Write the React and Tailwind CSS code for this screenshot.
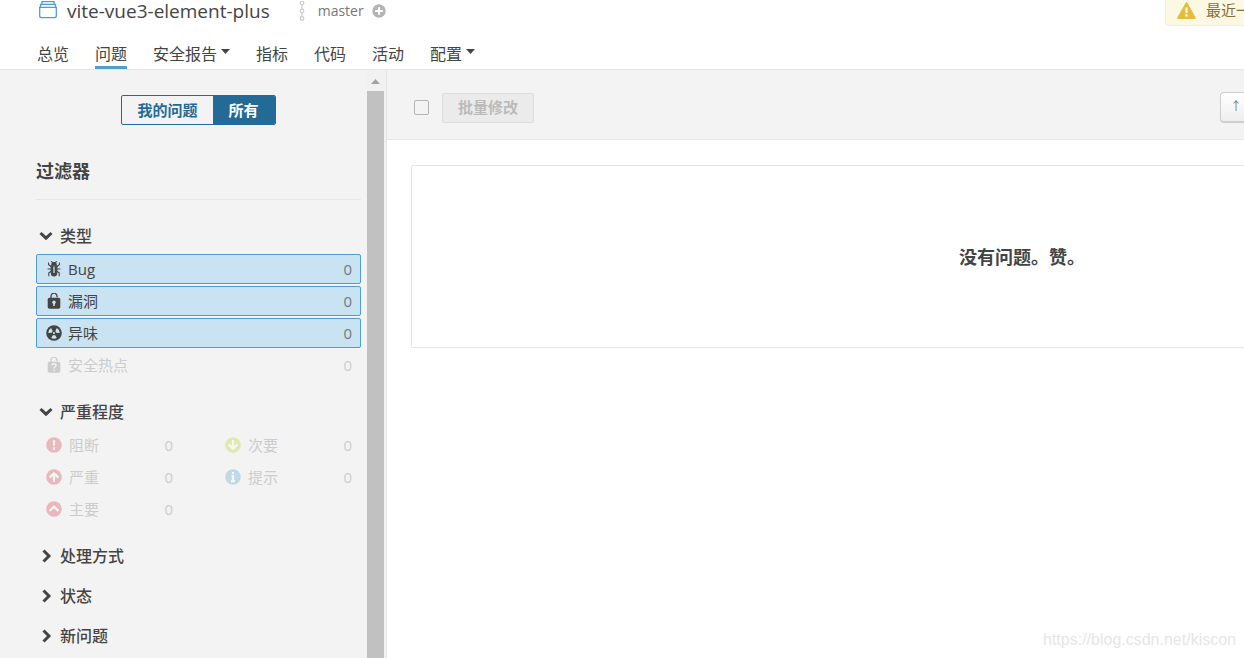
import { useState } from "react";

const TABS = [
  { label: "总览" },
  { label: "问题", active: true },
  { label: "安全报告", menu: true },
  { label: "指标" },
  { label: "代码" },
  { label: "活动" },
  { label: "配置", menu: true },
];

const TYPES = [
  { label: "Bug", icon: BugIcon, count: 0, selected: true },
  { label: "漏洞", icon: VulnerabilityIcon, count: 0, selected: true },
  { label: "异味", icon: CodeSmellIcon, count: 0, selected: true },
  { label: "安全热点", icon: HotspotIcon, count: 0, disabled: true },
];

const SEVERITIES = [
  { label: "阻断", color: "#d4333f", path: "M8 3.2v5.6M8 10.6v2.2", count: 0 },
  { label: "次要", color: "#b0d513", path: "M8 3v8.5M3.6 7.4 8 11.8l4.4-4.4", count: 0 },
  { label: "严重", color: "#d4333f", path: "M8 13V4.5M3.6 8.6 8 4.2l4.4 4.4", count: 0 },
  { label: "提示", color: "#4b9fd5", path: "M8 3v2.2M6.6 7H8v5M6 12.2h4", count: 0 },
  { label: "主要", color: "#d4333f", path: "M3.6 10 8 5.6l4.4 4.4", count: 0 },
];

function BugIcon() {
  return (
    <svg width="16" height="16" viewBox="0 0 16 16" fill="none" stroke="currentColor" strokeWidth="1.1">
      <path d="M5.4 0.2 6.8 2.2M10.6 0.2 9.2 2.2M2.6 1.6v2.2l2.8 2M13.4 1.6v2.2l-2.8 2M1.6 8h3.6M14.4 8h-3.6M5.2 10.2 2.8 11.8v3.4M10.8 10.2l2.4 1.6v3.4" />
      <path d="M5.8 3.6C5.8 1 10.2 1 10.2 3.6z" fill="currentColor" />
      <path d="M5.2 4.8h5.6v6.4c0 2-1.2 3.8-2.8 3.8s-2.8-1.8-2.8-3.8z" fill="currentColor" />
      <path d="M8 5.5v6.5" stroke="#cae3f2" strokeWidth="1.3" />
    </svg>
  );
}

function VulnerabilityIcon() {
  return (
    <svg width="16" height="16" viewBox="0 0 16 16">
      <path d="M5 6V3.3a3 3 0 0 1 6-.2v1.2" fill="none" stroke="currentColor" strokeWidth="1.3" />
      <rect x="1.7" y="4.8" width="12.6" height="11" rx="1.8" fill="currentColor" />
      <circle cx="8" cy="9.3" r="1.7" fill="#cae3f2" />
      <path d="M7.2 9.5h1.6v3.6H7.2z" fill="#cae3f2" />
    </svg>
  );
}

function CodeSmellIcon() {
  return (
    <svg width="16" height="16" viewBox="0 0 16 16">
      <circle cx="8" cy="8" r="7.8" fill="currentColor" />
      <g fill="#cae3f2">
        <path d="M7 10 5.2 13a5.8 5.8 0 0 0 5.6 0L9 10a2.2 2.2 0 0 1-2 0z" />
        <path d="M7 10 5.2 13a5.8 5.8 0 0 0 5.6 0L9 10a2.2 2.2 0 0 1-2 0z" transform="rotate(120 8 8)" />
        <path d="M7 10 5.2 13a5.8 5.8 0 0 0 5.6 0L9 10a2.2 2.2 0 0 1-2 0z" transform="rotate(240 8 8)" />
        <circle cx="8" cy="8" r="1.1" />
      </g>
    </svg>
  );
}

function HotspotIcon() {
  return (
    <svg width="16" height="16" viewBox="0 0 16 16" fill="none">
      <path d="M5 6V3.3a3 3 0 0 1 6-.2v1.2" stroke="currentColor" strokeWidth="1.3" />
      <rect x="1.7" y="4.8" width="12.6" height="11" rx="1.8" fill="currentColor" />
      <path d="M5.9 8.6c0-2.4 4.2-2.4 4.2 0 0 1.5-2.1 1.4-2.1 3M8 12.8v1.5" stroke="#f3f3f3" strokeWidth="1.4" />
    </svg>
  );
}

function SeverityIcon({ color, path }) {
  return (
    <svg width="16" height="16" viewBox="0 0 16 16">
      <circle cx="8" cy="8" r="7.8" fill={color} />
      <path d={path} fill="none" stroke="#fff" strokeWidth="2.2" />
    </svg>
  );
}

function Caret() {
  return (
    <svg width="9" height="5" viewBox="0 0 9 5" fill="currentColor" className="mb-1">
      <path d="M0 0h9L4.5 5z" />
    </svg>
  );
}

function Facet({ title, children }) {
  return (
    <section>
      <h3>
        <button type="button" aria-expanded={!!children} className="flex h-6 items-center gap-1.5 pl-0.5 text-base font-medium text-[#444]">
          <svg width="16" height="16" viewBox="0 0 16 16" fill="none" stroke="currentColor" strokeWidth="3">
            <path d={children ? "M2.5 5 8 10.2 13.5 5" : "M5.5 2.5 11 8l-5.5 5.5"} />
          </svg>
          {title}
        </button>
      </h3>
      {children && <div className="pt-1.5 pb-1">{children}</div>}
    </section>
  );
}

function Header() {
  return (
    <header className="flex h-[70px] shrink-0 flex-col justify-between border-b border-[#e6e6e6] bg-white">
      <div className="flex h-[26px] items-start">
        <div className="flex h-[22px] items-center pl-[38px]">
          <svg width="20" height="20" viewBox="0 0 20 20" fill="none" stroke="#4b9fd5" strokeWidth="1.3" className="mb-1">
            <path d="M1.7 8.3h16.6v8.4a2 2 0 0 1-2 2H3.7a2 2 0 0 1-2-2zM2.5 8V5.3h15V8M4 5V2.7h12V5" />
          </svg>
          <h1 className="ml-[9px] text-[19px] leading-[22px] text-[#444]">vite-vue3-element-plus</h1>
          <svg width="8" height="20" viewBox="0 0 8 20" fill="none" stroke="#ccc" strokeWidth="1.2" className="ml-7">
            <circle cx="4" cy="2" r="1.8" />
            <circle cx="4" cy="10" r="1.8" />
            <circle cx="4" cy="17.5" r="1.8" />
            <path d="M4 4v4M4 12v3.5" />
          </svg>
          <span className="ml-3 text-sm text-[#777]">master</span>
          <button type="button" aria-label="分支" className="ml-2">
            <svg width="14" height="14" viewBox="0 0 14 14">
              <circle cx="7" cy="7" r="6.7" fill="#b4b4b4" />
              <path d="M7 3.2v7.6M3.2 7h7.6" stroke="#fff" strokeWidth="2" />
            </svg>
          </button>
        </div>
        <div className="ml-auto flex h-[26px] w-[79px] items-center gap-2.5 overflow-hidden rounded-bl-sm border-b border-l border-[#faebcc] bg-[#fcf8e3] pb-1 pl-[11px] text-[15px] whitespace-nowrap text-[#8a6d3b]">
          <svg width="19" height="17" viewBox="0 0 19 17" className="shrink-0">
            <path d="M9.5 1.2 17.8 16H1.2z" fill="#e3bd3c" stroke="#e3bd3c" strokeWidth="2" strokeLinejoin="round" />
            <path d="M9.5 5.5v5.2M9.5 12.2v2.2" stroke="#fff" strokeWidth="2.2" />
          </svg>
          最近一
        </div>
      </div>
      <nav className="flex gap-[26px] pl-[37px] text-base text-[#444]">
        {TABS.map((tab) => (
          <a
            key={tab.label}
            href="#"
            className={`flex h-[30px] items-center gap-1 border-b-3 pt-0.5 ${tab.active ? "border-[#4b9fd5]" : "border-transparent"}`}
          >
            {tab.label}
            {tab.menu && <Caret />}
          </a>
        ))}
      </nav>
    </header>
  );
}

function Sidebar() {
  const [mine, setMine] = useState(false);
  const on = "bg-[#236a97] text-white";
  const off = "text-[#236a97]";

  return (
    <aside className="flex w-[387px] shrink-0 border-r border-[#e6e6e6] bg-[#f3f3f3] text-[15px]">
      <div className="flex-1 pt-[25px] pr-1.5 pl-9">
        <div className="mx-auto flex h-[30px] w-fit overflow-hidden rounded-xs border border-[#236a97] font-bold">
          <button type="button" onClick={() => setMine(true)} className={`px-[15px] ${mine ? on : off}`}>我的问题</button>
          <button type="button" onClick={() => setMine(false)} className={`px-4 ${mine ? off : on}`}>所有</button>
        </div>

        <h2 className="mt-8 mb-6 border-b border-[#e6e6e6] pb-3.5 text-lg font-bold text-[#444]">过滤器</h2>

        <div className="flex flex-col gap-4">
          <Facet title="类型">
            <div className="flex flex-col gap-0.5">
              {TYPES.map(({ label, icon: Icon, count, selected, disabled }) => (
                <button
                  key={label}
                  type="button"
                  disabled={disabled}
                  className={`flex h-[30px] items-center gap-1.5 rounded-xs border px-2 pl-[9px] ${
                    selected ? "border-[#4b9fd5] bg-[#cae3f2] text-[#444]" : "border-transparent text-[#ccc]"
                  }`}
                >
                  <Icon />
                  {label}
                  <span className={`ml-auto ${selected ? "text-[#777]" : ""}`}>{count}</span>
                </button>
              ))}
            </div>
          </Facet>
          <Facet title="严重程度">
            <div className="grid grid-cols-2 gap-x-[33px] gap-y-0.5">
              {SEVERITIES.map((s) => (
                <button key={s.label} type="button" disabled className="flex h-[30px] items-center gap-[7px] pr-[9px] pl-2.5 text-[#ccc]">
                  <span className="opacity-30"><SeverityIcon color={s.color} path={s.path} /></span>
                  {s.label}
                  <span className="ml-auto">{s.count}</span>
                </button>
              ))}
            </div>
          </Facet>
          <Facet title="处理方式" />
          <Facet title="状态" />
          <Facet title="新问题" />
        </div>
      </div>
      <div className="flex w-[19px] flex-col items-start bg-[#f1f1f1]">
        <div className="flex h-[21px] w-[17px] items-center justify-center pt-0.5 text-[#a3a3a3]">
          <svg width="9" height="5" viewBox="0 0 9 5" fill="currentColor"><path d="M0 5h9L4.5 0z" /></svg>
        </div>
        <div className="w-[17px] flex-1 bg-[#c1c1c1]" />
      </div>
    </aside>
  );
}

export default function App() {
  return (
    <div className="flex h-screen flex-col overflow-hidden bg-white font-['Open_Sans','Noto_Sans_CJK_SC',sans-serif]">
      <Header />
      <div className="flex min-h-0 flex-1 overflow-hidden">
        <Sidebar />
        <main className="flex min-w-0 flex-1 flex-col overflow-hidden">
          <div className="flex h-[70px] shrink-0 items-center border-b border-[#e6e6e6] bg-[#f3f3f3] pt-1.5 pl-[27px]">
            <input type="checkbox" aria-label="全选" className="size-[15px] appearance-none rounded-xs border border-[#b4b4b4] bg-[#f3f3f3]" />
            <button type="button" disabled className="ml-[13px] h-[30px] rounded-xs border border-[#ddd] bg-[#ebebeb] px-[15px] text-[15px] font-bold text-[#bbb]">
              批量修改
            </button>
            <button type="button" className="-mr-2 ml-auto h-[31px] w-8 rounded-sm border border-b-2 border-[#cdcdcd] bg-linear-to-b from-white to-[#eee] text-xs text-[#777]">
              ↑
            </button>
          </div>
          <div className="flex-1 pt-[25px] pl-6">
            <div className="flex h-[183px] w-full min-w-[1222px] items-center justify-center rounded-xs border border-[#e6e6e6] text-lg font-bold text-[#444]">
              没有问题。赞。
            </div>
          </div>
          <p className="pr-2 pb-1.5 text-right font-['Liberation_Sans',sans-serif] text-base text-[#e6e6e6]">https://blog.csdn.net/kiscon</p>
        </main>
      </div>
    </div>
  );
}
